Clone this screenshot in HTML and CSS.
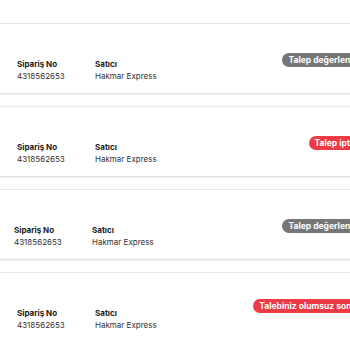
FILE: index.html
```html
<!DOCTYPE html>
<html lang="tr">
<head>
<meta charset="utf-8">
<link rel="stylesheet" href="styles.css">
</head>
<body>
<div class="list">
  <div class="card">
    <div class="info">
      <div class="col col-order"><div class="label">Sipariş No</div><div class="value">4318562653</div></div>
      <div class="col"><div class="label">Satıcı</div><div class="value">Hakmar Express</div></div>
    </div>
    <span class="badge badge-gray">Talep değerlendiriliyor</span>
  </div>
  <div class="card">
    <div class="info">
      <div class="col col-order"><div class="label">Sipariş No</div><div class="value">4318562653</div></div>
      <div class="col"><div class="label">Satıcı</div><div class="value">Hakmar Express</div></div>
    </div>
    <span class="badge badge-red">Talep iptal edildi</span>
  </div>
  <div class="card card-shift">
    <div class="info">
      <div class="col col-order"><div class="label">Sipariş No</div><div class="value">4318562653</div></div>
      <div class="col"><div class="label">Satıcı</div><div class="value">Hakmar Express</div></div>
    </div>
    <span class="badge badge-gray">Talep değerlendiriliyor</span>
  </div>
  <div class="card card-high">
    <div class="info">
      <div class="col col-order"><div class="label">Sipariş No</div><div class="value">4318562653</div></div>
      <div class="col"><div class="label">Satıcı</div><div class="value">Hakmar Express</div></div>
    </div>
    <span class="badge badge-red">Talebiniz olumsuz sonuçlandı</span>
  </div>
</div>
</body>
</html>
```
FILE: styles.css
```css
html, body {
  margin: 0;
  padding: 0;
  background: #ffffff;
  overflow: hidden;
}
body {
  font-family: Inter, "Noto Sans", sans-serif;
  color: #1f1f1f;
}
.list {
  display: flex;
  flex-direction: column;
  gap: 13px;
  padding-top: 23px;
  width: 398px;
}
.card {
  height: 70px;
  box-sizing: border-box;
  display: flex;
  align-items: flex-start;
  padding: 29px 10px 0 17px;
  background: #ffffff;
  border-top: 1px solid #e9e9e9;
  box-shadow: 0 1px 2px rgba(0, 0, 0, 0.18);
}
.card-shift {
  padding-left: 14px;
}
.card-high {
  padding-top: 26px;
}
.card-high .info {
  margin-top: 8px;
}
.info {
  display: flex;
  margin-top: 5px;
}
.col-order {
  width: 78px;
}
.label {
  font-size: 8px;
  font-weight: 700;
  line-height: 12px;
  color: #1a1a1a;
}
.value {
  font-size: 8px;
  line-height: 12px;
  color: #333333;
}
.badge {
  margin-left: auto;
  font-size: 8.5px;
  font-weight: 700;
  color: #ffffff;
  line-height: 14px;
  height: 14px;
  padding: 0 6px;
  border-radius: 7px;
  white-space: nowrap;
}
.badge-gray {
  background: #767676;
}
.badge-red {
  background: #ec3b45;
}
```
